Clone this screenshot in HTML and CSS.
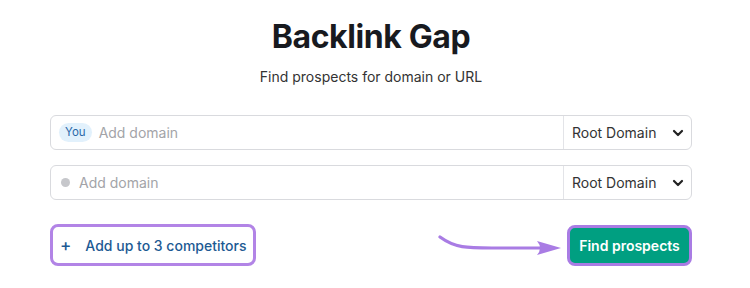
FILE: index.html
```html
<!DOCTYPE html>
<html lang="en">
<head>
    <meta charset="UTF-8">
    <meta name="viewport" content="width=device-width, initial-scale=1.0">
    <title>Backlink Gap</title>
    <link rel="stylesheet" href="styles.css">
</head>
<body>
    <div class="wrap">
        <h1 class="title">Backlink Gap</h1>
        <p class="sub">Find prospects for domain or URL</p>
        <div class="row">
            <div class="field">
                <span class="badge">You</span>
                <span class="ph">Add domain</span>
            </div>
            <div class="select">
                <span>Root Domain</span>
                <svg width="12" height="8" viewBox="0 0 12 8"><path d="M2 2l4 4 4-4" fill="none" stroke="#222" stroke-width="2.2" stroke-linecap="round" stroke-linejoin="round"/></svg>
            </div>
        </div>
        <div class="row">
            <div class="field">
                <span class="dot"></span>
                <span class="ph">Add domain</span>
            </div>
            <div class="select">
                <span>Root Domain</span>
                <svg width="12" height="8" viewBox="0 0 12 8"><path d="M2 2l4 4 4-4" fill="none" stroke="#222" stroke-width="2.2" stroke-linecap="round" stroke-linejoin="round"/></svg>
            </div>
        </div>
        <div class="actions">
            <div class="add"><span class="plus">+</span>Add up to 3 competitors</div>
            <div class="right">
                <svg class="arrow" width="126" height="22" viewBox="0 0 126 22">
                    <path d="M3 3 C 18 14, 30 14, 55 14 L 104 14" fill="none" stroke="#a97ce4" stroke-width="3.2" stroke-linecap="round"/>
                    <path d="M100 7 L 124 14 L 100 21 Q 106 14 100 7 Z" fill="#a97ce4"/>
                </svg>
                <div class="find">Find prospects</div>
            </div>
        </div>
    </div>
</body>
</html>
```

FILE: styles.css
```css
* {
    margin: 0;
    padding: 0;
    box-sizing: border-box;
}
body {
    background: #ffffff;
    font-family: Inter, "Noto Sans", sans-serif;
    color: #333;
}
.wrap {
    width: 642px;
    margin-left: 50px;
    padding-top: 16px;
}
.title {
    text-align: center;
    font-size: 32px;
    font-weight: 700;
    color: #181a1f;
    letter-spacing: -0.4px;
    line-height: 42px;
}
.sub {
    text-align: center;
    font-size: 14px;
    color: #333;
    margin-top: 9px;
    line-height: 20px;
}
.row {
    display: flex;
    height: 35px;
    border: 1px solid #d9dade;
    border-radius: 6px;
    margin-top: 15px;
}
.wrap .row:first-of-type {
    margin-top: 28px;
}
.field {
    flex: 1;
    display: flex;
    align-items: center;
    padding-left: 8px;
    border-right: 1px solid #e3e4e8;
}
.badge {
    background: #e2f1fc;
    color: #2a68a8;
    font-size: 11.5px;
    padding: 2px 6px;
    border-radius: 10px;
    margin-right: 7px;
    line-height: 15px;
}
.dot {
    width: 9px;
    height: 9px;
    border-radius: 50%;
    background: #c6c7cb;
    margin: 0 9px 0 2px;
}
.ph {
    color: #a3a4a8;
    font-size: 14px;
}
.select {
    width: 127px;
    display: flex;
    align-items: center;
    justify-content: space-between;
    padding: 0 7px 0 8px;
    font-size: 14px;
    color: #333;
}
.actions {
    display: flex;
    justify-content: space-between;
    align-items: center;
    margin-top: 24px;
}
.add {
    border: 3px solid #b284e6;
    border-radius: 8px;
    height: 42px;
    width: 206px;
    display: flex;
    align-items: center;
    padding-left: 7px;
    color: #1d5a93;
    font-size: 14px;
    font-weight: 500;
    white-space: nowrap;
}
.plus {
    font-size: 17px;
    margin-right: 14px;
}
.right {
    display: flex;
    align-items: center;
}
.arrow {
    margin-right: 4px;
}
.find {
    border: 3px solid #a97ce4;
    border-radius: 8px;
    height: 41px;
    width: 125px;
    background: #009f81;
    color: #ffffff;
    font-size: 14px;
    font-weight: 600;
    white-space: nowrap;
    display: flex;
    align-items: center;
    justify-content: center;
}
```
